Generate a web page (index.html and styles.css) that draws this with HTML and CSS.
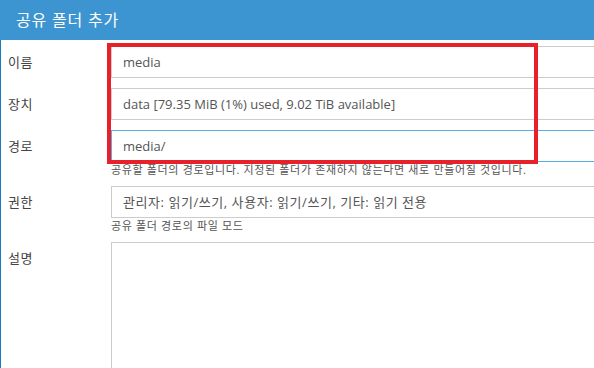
FILE: index.html
```html
<!DOCTYPE html>
<html lang="ko">
<head>
    <meta charset="utf-8">
    <title>공유 폴더 추가</title>
    <link rel="stylesheet" href="styles.css">
</head>
<body>
    <div class="dialog">
        <!-- Cabeçalho -->
        <div class="dialog-header">공유 폴더 추가</div>

        <!-- Formulário -->
        <form class="dialog-body">
            <div class="row">
                <label class="row-label">이름</label>
                <div class="row-field">
                    <input type="text" class="field" value="media">
                </div>
            </div>
            <div class="row">
                <label class="row-label">장치</label>
                <div class="row-field">
                    <div class="field">data [79.35 MiB (1%) used, 9.02 TiB available]</div>
                </div>
            </div>
            <div class="row">
                <label class="row-label">경로</label>
                <div class="row-field">
                    <input type="text" class="field field-focus" value="media/">
                    <div class="help">공유할 폴더의 경로입니다. 지정된 폴더가 존재하지 않는다면 새로 만들어질 것입니다.</div>
                </div>
            </div>
            <div class="row">
                <label class="row-label">권한</label>
                <div class="row-field">
                    <div class="field field-ko">관리자: 읽기/쓰기, 사용자: 읽기/쓰기, 기타: 읽기 전용</div>
                    <div class="help">공유 폴더 경로의 파일 모드</div>
                </div>
            </div>
            <div class="row">
                <label class="row-label">설명</label>
                <div class="row-field">
                    <textarea class="field field-area"></textarea>
                </div>
            </div>

            <!-- Destaque -->
            <div class="highlight"></div>
        </form>
    </div>
</body>
</html>
```

FILE: styles.css
```css
/* Geral */
* {
    margin: 0;
    padding: 0;
    box-sizing: border-box;
}

html, body {
    overflow: hidden;
}

body {
    background-color: #fff;
    color: #333;
    font-family: "Open Sans", "Noto Sans CJK KR", sans-serif;
    font-size: 13px;
    height: 368px;
}

/* Cabeçalho */
.dialog-header {
    height: 40px;
    line-height: 40px;
    padding-left: 16px;
    background-color: #3c94d0;
    color: #fff;
    font-size: 16px;
    letter-spacing: 0.8px;
}

/* Corpo */
.dialog-body {
    position: relative;
    border-left: 1px solid #1b7cc2;
    padding-top: 6px;
    height: 328px;
}

.row {
    display: grid;
    grid-template-columns: 110px 1fr;
    margin-bottom: 10px;
}

.row-label {
    padding-left: 7px;
    line-height: 32px;
    color: #444;
    letter-spacing: 0.5px;
}

.row-field {
    margin-right: -20px;
}

.field {
    display: block;
    width: 100%;
    height: 32px;
    line-height: 30px;
    padding: 0 11px;
    border: 1px solid #ccc;
    background: #fff;
    color: #555;
    font-family: inherit;
    font-size: 13px;
    white-space: nowrap;
    outline: none;
}

.field-ko {
    letter-spacing: 0.55px;
}

.field-focus {
    border-color: #5aaee3;
}

.field-area {
    height: 140px;
    resize: none;
}

.help {
    font-size: 11px;
    line-height: 14px;
    color: #555;
    letter-spacing: 0.65px;
    padding-top: 1px;
    margin-bottom: -1px;
}

/* Destaque vermelho */
.highlight {
    position: absolute;
    left: 106px;
    top: 3px;
    width: 431px;
    height: 121px;
    border: 4px solid #e8202a;
}
```
